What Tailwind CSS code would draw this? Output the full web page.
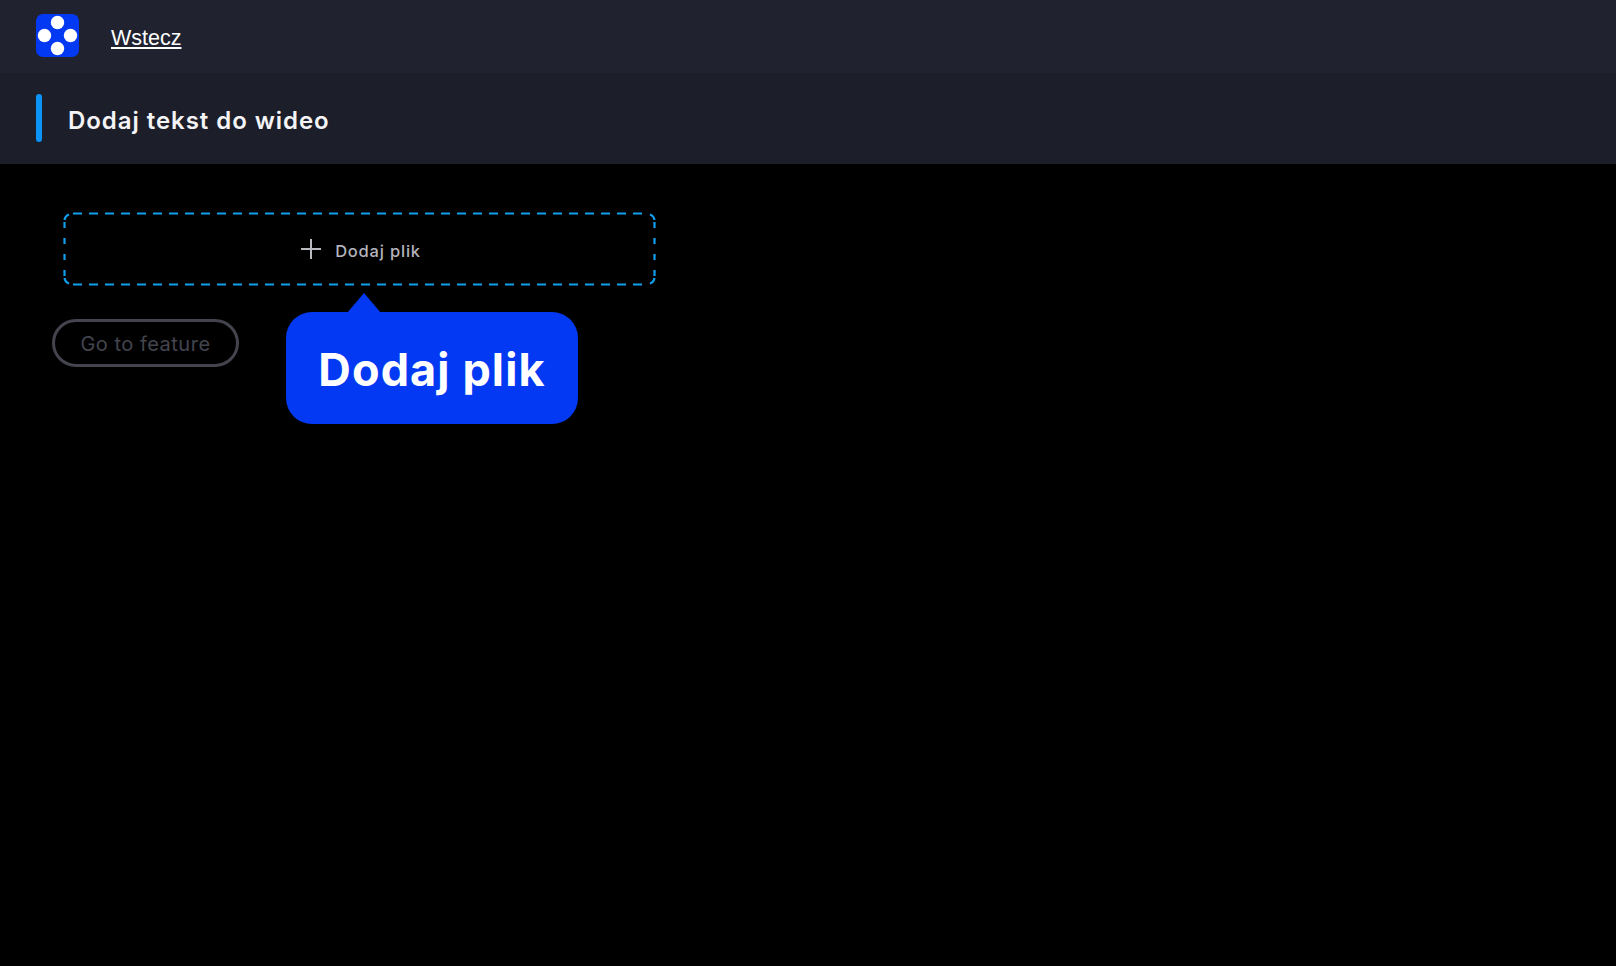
<!DOCTYPE html>
<html lang="pl">
<head>
<meta charset="utf-8">
<title>Dodaj tekst do wideo</title>
<script src="https://cdn.jsdelivr.net/npm/@tailwindcss/browser@4"></script>
</head>
<body class="w-[1616px] h-[966px] overflow-hidden bg-black font-['Inter','Noto_Sans',sans-serif]">
  <header class="h-[73px] bg-[#20232f] flex items-center pl-[36px] pb-[2px]">
    <svg class="w-[43px] h-[43px]" viewBox="0 0 43 43" aria-hidden="true">
      <rect width="43" height="43" rx="7" fill="#0339f2"/>
      <circle cx="21.5" cy="8.5" r="6.7" fill="#fff"/>
      <circle cx="8.5" cy="21.5" r="6.7" fill="#fff"/>
      <circle cx="34.5" cy="21.5" r="6.7" fill="#fff"/>
      <circle cx="21.5" cy="34.5" r="6.7" fill="#fff"/>
    </svg>
    <a href="#" class="ml-[32px] text-[21.5px] leading-none text-white underline font-['Liberation_Sans',sans-serif] mt-[7px]">Wstecz</a>
  </header>
  <section class="h-[91px] bg-[#1c1e29] flex items-center pl-[36px]">
    <div class="w-[6px] h-[48px] rounded-full bg-[#0b93f6] mt-[-1px]"></div>
    <h1 class="ml-[26px] text-[24px] leading-none font-semibold tracking-[0.95px] text-[#f4f4f6] mt-[5px]">Dodaj tekst do wideo</h1>
  </section>
  <main class="relative pt-[48px]">
    <div class="relative ml-[63px] w-[593px] h-[74px] flex items-center justify-center gap-[14px] pl-[3px]">
      <svg class="absolute inset-0 w-[593px] h-[74px]" viewBox="0 0 593 74" fill="none" stroke="#0f9fee" stroke-width="2.2" aria-hidden="true">
        <path d="M10 1.5H583" stroke-dasharray="9 7"/>
        <path d="M10 72.5H583" stroke-dasharray="9 7"/>
        <path d="M1.5 10V64" stroke-dasharray="6 10"/>
        <path d="M591.5 10V64" stroke-dasharray="6 10"/>
        <path d="M1.5 8A7 7 0 0 1 6 2.5M1.5 66A7 7 0 0 0 6 71.5M591.5 8A7 7 0 0 0 587 2.5M591.5 66A7 7 0 0 1 587 71.5"/>
      </svg>
      <svg class="w-[20px] h-[20px]" viewBox="0 0 20 20" fill="none" stroke="#b9b9c0" stroke-width="2" aria-hidden="true"><path d="M10 0V20M0 10H20"/></svg>
      <span class="text-[16.5px] leading-none font-medium tracking-[0.8px] text-[#b4b4bc] mt-[5px]">Dodaj plik</span>
    </div>
    <div class="ml-[52px] mt-[33px] w-[187px] h-[48px] rounded-full border-[3px] border-[#43444e] flex items-center justify-center">
      <span class="text-[20px] leading-none tracking-[0.5px] text-[#44454f] mt-[2px]">Go to feature</span>
    </div>
    <div class="absolute left-[286px] top-[148px] w-[292px] h-[112px] rounded-[26px] bg-[#0339f2] flex items-center justify-center">
      <svg class="absolute left-[61px] top-[-19px] w-[34px] h-[20px]" viewBox="0 0 34 20" aria-hidden="true"><path d="M0 20L17 0L34 20Z" fill="#0339f2"/></svg>
      <span class="text-[45px] leading-none font-bold tracking-[1.1px] text-white mt-[3px]">Dodaj plik</span>
    </div>
  </main>
</body>
</html>
